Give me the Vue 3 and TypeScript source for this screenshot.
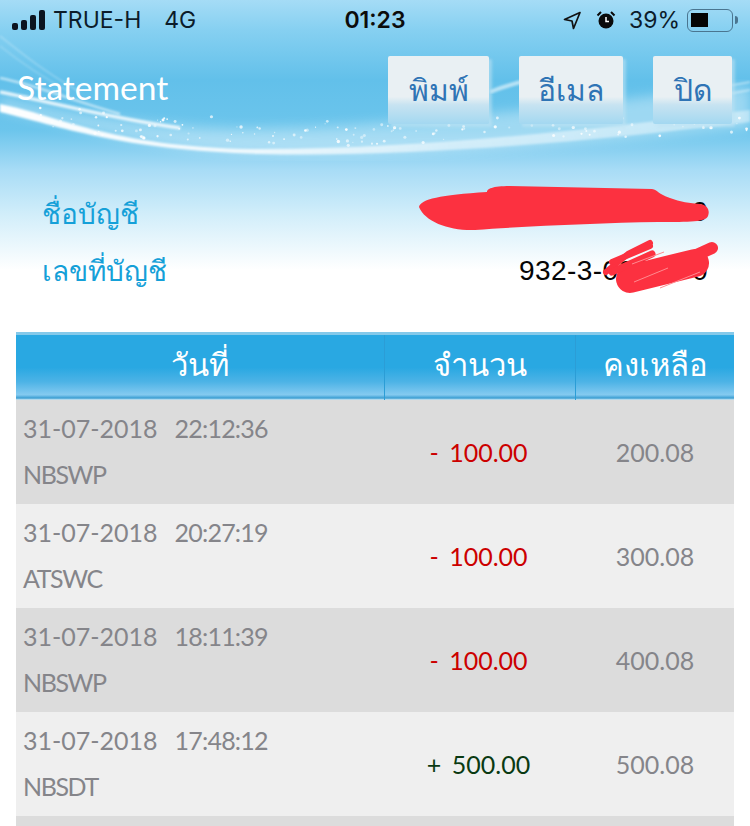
<script setup lang="ts">
interface Row {
  date: string
  time: string
  code: string
  amount: string
  balance: string
  credit: boolean
}
const rows: Row[] = [
  { date: '31-07-2018', time: '22:12:36', code: 'NBSWP', amount: '- 100.00', balance: '200.08', credit: false },
  { date: '31-07-2018', time: '20:27:19', code: 'ATSWC', amount: '- 100.00', balance: '300.08', credit: false },
  { date: '31-07-2018', time: '18:11:39', code: 'NBSWP', amount: '- 100.00', balance: '400.08', credit: false },
  { date: '31-07-2018', time: '17:48:12', code: 'NBSDT', amount: '+ 500.00', balance: '500.08', credit: true }
]
const actions = [
  { label: 'พิมพ์', width: 101 },
  { label: 'อีเมล', width: 104 },
  { label: 'ปิด', width: 79 }
]
// scattered specks along the wave
const hash = (n: number) => {
  const v = Math.sin(n * 12.9898) * 43758.5453
  return v - Math.floor(v)
}
const sparkles = Array.from({ length: 150 }, (_, i) => {
  const x = 40 + hash(i + 1) * 710
  const mid = x < 300 ? 112 + (x - 40) * 0.06 : 127 - (x - 300) * 0.03
  return {
    x,
    y: mid + hash(i + 200) * 26 - 6,
    r: 0.6 + hash(i + 400) * 1.1,
    o: 0.35 + hash(i + 600) * 0.6
  }
})
</script>

<template>
  <div class="screen">
    <svg class="wave" width="750" height="170" viewBox="0 0 750 170">
      <defs>
        <filter id="soft"><feGaussianBlur stdDeviation="1.2" /></filter>
        <filter id="softer"><feGaussianBlur stdDeviation="6" /></filter>
        <filter id="speck"><feGaussianBlur stdDeviation="0.5" /></filter>
        <linearGradient id="band" x1="0" x2="1" y1="0" y2="0">
          <stop offset="0" stop-color="#fff" stop-opacity="1" />
          <stop offset="0.3" stop-color="#fff" stop-opacity="0.85" />
          <stop offset="0.6" stop-color="#fff" stop-opacity="0.5" />
          <stop offset="1" stop-color="#fff" stop-opacity="0.4" />
        </linearGradient>
      </defs>
      <path d="M0 98 C60 112 120 124 230 128 C400 130 600 100 750 86 L750 128 C600 142 430 158 260 153 C150 150 70 124 0 110 Z" fill="#ffffff" opacity="0.35" filter="url(#softer)" />
      <path d="M0 104 C60 116 110 146 250 149 C420 150 600 128 750 110 L750 122 C600 140 420 158 260 154 C120 150 60 126 0 112 Z" fill="url(#band)" filter="url(#soft)" />
      <path d="M0 92 C60 104 110 118 180 128" fill="none" stroke="#fff" stroke-width="3.5" opacity="0.8" filter="url(#soft)" />
      <path d="M0 78 C40 86 70 100 120 114" fill="none" stroke="#fff" stroke-width="2.5" opacity="0.55" filter="url(#soft)" />
      <path d="M0 36 C25 56 45 72 80 92" fill="none" stroke="#fff" stroke-width="1.5" opacity="0.3" filter="url(#soft)" />
      <path d="M0 46 C20 62 40 76 70 92" fill="none" stroke="#fff" stroke-width="1.2" opacity="0.25" filter="url(#soft)" />
      <path d="M490 92 C510 84 520 82 530 80" fill="none" stroke="#fff" stroke-width="4" opacity="0.55" filter="url(#soft)" />
      <path d="M690 92 C710 88 730 86 750 82 M685 100 C710 96 730 94 750 90" fill="none" stroke="#fff" stroke-width="1.5" opacity="0.55" filter="url(#soft)" />
      <g filter="url(#speck)">
        <circle v-for="(s, i) in sparkles" :key="i" :cx="s.x" :cy="s.y" :r="s.r" fill="#fff" :opacity="s.o" />
      </g>
    </svg>

    <div class="status">
      <div class="status-left">
        <span class="signal"><i></i><i></i><i></i><i></i></span>
        <span class="carrier">TRUE-H</span>
        <span class="net">4G</span>
      </div>
      <div class="clock">01:23</div>
      <div class="status-right">
        <svg width="20" height="20" viewBox="0 0 20 20"><path d="M18 2.5 2.5 9.5 10 11l1.5 7.5Z" fill="none" stroke="#111" stroke-width="1.7" stroke-linejoin="round" /></svg>
        <svg class="alarm" width="22" height="22" viewBox="0 0 22 22">
          <circle cx="11" cy="12" r="7.5" fill="#0a0a0a" />
          <path d="M11 8v4.5h3" fill="none" stroke="#fff" stroke-width="1.5" />
          <path d="M2.5 6.5 6 3M19.5 6.5 16 3" stroke="#0a0a0a" stroke-width="2" />
        </svg>
        <span class="pct">39%</span>
        <span class="battery"><b></b></span>
        <span class="nub"></span>
      </div>
    </div>

    <div class="title-bar">
      <h1>Statement</h1>
      <div class="actions">
        <button v-for="a in actions" :key="a.label" :style="{ width: a.width + 'px' }">{{ a.label }}</button>
      </div>
    </div>

    <div class="account">
      <div class="line">
        <span class="label">ชื่อบัญชี</span>
        <span class="number name">000000000 000000 0</span>
      </div>
      <div class="line">
        <span class="label">เลขที่บัญชี</span>
        <span class="number">932-3-00000-0</span>
      </div>
      <svg class="scribble" width="750" height="182" viewBox="0 0 750 182">
        <path d="M419 57 C421 49 440 45 487 42 C487 39 492 36 510 36 L652 39 C658 40 658 44 670 48 C680 52 690 53 700 54 C708 55 710 61 708 66 C706 72 690 72 658 72 C600 73 530 76 475 80 C450 81 425 72 419 57 Z" fill="#fc3140" />
        <g fill="none" stroke="#fc3140" stroke-linecap="round" stroke-linejoin="round">
          <path d="M690 108 L712 98" stroke-width="12" />
          <path d="M630 129 L695 113" stroke-width="28" />
          <path d="M606 122 L628 104 L650 93" stroke-width="6" />
          <path d="M612 112 L650 96" stroke-width="6" />
          <path d="M612 122 L652 104" stroke-width="7" />
        </g>
        <path d="M632 114 L664 102 M634 132 L668 118 M660 138 L700 122" fill="none" stroke="#ff8a90" stroke-width="1" />
      </svg>
    </div>

    <div class="table">
      <div class="head">
        <div>วันที่</div>
        <div>จำนวน</div>
        <div>คงเหลือ</div>
      </div>
      <div v-for="(r, i) in rows" :key="i" class="row" :class="{ odd: i % 2 === 0 }">
        <div class="c-date">
          <div class="date">{{ r.date }}<span class="time">{{ r.time }}</span></div>
          <div class="code">{{ r.code }}</div>
        </div>
        <div class="c-amount" :class="{ credit: r.credit }">{{ r.amount }}</div>
        <div class="c-balance">{{ r.balance }}</div>
      </div>
      <div class="row odd"></div>
    </div>
  </div>
</template>

<style>
html, body { margin: 0; background: #fff; overflow: hidden; }
</style>

<style scoped>
.screen {
  position: relative;
  width: 750px;
  height: 826px;
  overflow: hidden;
  font-family: Lato, "Noto Sans", sans-serif;
  background: linear-gradient(#a5dcf6 0, #86d0f1 30px, #62c0ea 80px, #6cc5ec 130px, #a8dcf6 170px, #d2eefa 215px, #ffffff 270px);
}
.wave { position: absolute; left: 0; top: 0; }
.status {
  position: relative;
  height: 40px;
  display: flex;
  align-items: center;
  justify-content: space-between;
  padding: 0 12px;
  font-family: Inter, "Liberation Sans", sans-serif;
  font-size: 23px;
  color: #0c1c2a;
}
.status-left, .status-right { display: flex; align-items: center; width: 260px; }
.status-right { justify-content: flex-end; }
.signal { display: flex; align-items: flex-end; gap: 3px; height: 20px; margin-right: 8px; }
.signal i { display: block; width: 6px; background: #0c1420; border-radius: 2px; }
.signal i:nth-child(1) { height: 7px; }
.signal i:nth-child(2) { height: 10px; }
.signal i:nth-child(3) { height: 15px; }
.signal i:nth-child(4) { height: 20px; }
.net { margin-left: 23px; }
.clock { font-weight: 600; color: #0c0c0c; }
.alarm { margin-left: 13px; }
.pct { margin-left: 12px; }
.battery {
  display: block;
  width: 46px;
  height: 23px;
  margin-left: 7px;
  padding: 3px;
  box-sizing: border-box;
  border: 1.5px solid #4a7590;
  border-radius: 6px;
}
.battery b { display: block; width: 17px; height: 14px; background: #050505; }
.nub { width: 3px; height: 8px; margin-left: 2px; background: #4a7590; border-radius: 0 3px 3px 0; }
.title-bar {
  position: relative;
  display: flex;
  justify-content: space-between;
  padding: 16px 18px 0 17px;
  height: 110px;
  box-sizing: border-box;
}
h1 {
  margin: 10px 0 0;
  font-size: 33.5px;
  font-weight: 400;
  line-height: 42px;
  color: #fff;
}
.actions { display: flex; gap: 30px; }
button {
  height: 68px;
  border: 0;
  padding: 0;
  border-radius: 2px;
  background: linear-gradient(#e9f0f3 0, #e9f0f3 60%, #c7e3f1 72%, #a3d8f1 100%);
  box-shadow: 3px 3px 3px rgba(190, 226, 244, 0.6);
  font-family: inherit;
  font-size: 30px;
  color: #2f74b5;
}
.account {
  position: relative;
  height: 182px;
  padding: 30px 42px 0;
  box-sizing: border-box;
  font-size: 28px;
}
.line {
  display: flex;
  justify-content: space-between;
  height: 57px;
  align-items: center;
  padding-top: 10px;
  box-sizing: border-box;
}
.label { color: #15a0d8; }
.number {
  font-family: "Liberation Sans", sans-serif;
  font-size: 28px;
  letter-spacing: 0.4px;
  color: #050505;
}
.number.name { margin-bottom: 4px; }
.scribble { position: absolute; left: 0; top: 0; }
.table { margin: 0 16px; }
.head {
  display: grid;
  grid-template-columns: 369px 191px 158px;
  height: 68px;
  box-sizing: border-box;
  border-top: 3px solid #84c9ea;
  background: linear-gradient(#29a8e2 0, #29a8e2 50%, #4db3e6 72%, #84caf0 92%, #3b9ed2 97%, #d9edf6 100%);
  color: #fff;
  font-size: 31px;
}
.head > div {
  display: flex;
  align-items: center;
  justify-content: center;
  padding-bottom: 5px;
  box-sizing: border-box;
  border-right: 1px solid #2b9dd6;
}
.head > div:last-child { border-right: 0; }
.row {
  display: grid;
  grid-template-columns: 369px 191px 158px;
  align-items: center;
  height: 104px;
  background: #efefef;
  color: #85858a;
  font-size: 25px;
}
.row.odd { background: #dcdcdc; }
.c-date { padding: 0 0 3px 7px; }
.date { line-height: 46px; }
.time { margin-left: 17px; letter-spacing: -0.8px; }
.code { line-height: 46px; letter-spacing: -1.4px; }
.c-amount, .c-balance { text-align: center; }
.c-amount { color: #cc0000; word-spacing: 4px; padding-right: 4px; }
.c-amount.credit { color: #0a3a12; }
</style>
